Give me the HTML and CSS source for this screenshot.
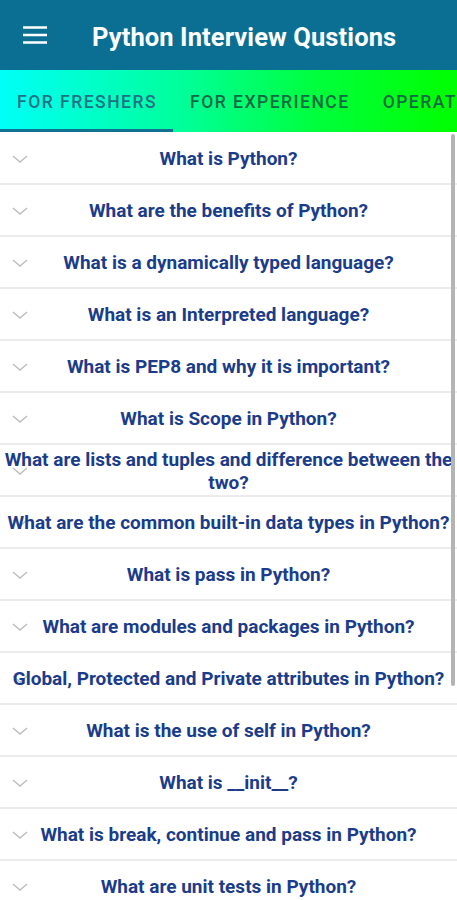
FILE: index.html
```html
<!DOCTYPE html>
<html>
<head>
<meta charset="utf-8">
<link rel="stylesheet" href="styles.css">
</head>
<body>
<div class="app">
  <header class="appbar">
    <svg class="menu" width="26" height="24" viewBox="0 0 26 24"><path d="M1 4.5h24M1 12h24M1 19.5h24" stroke="#fff" stroke-width="2.6" fill="none"/></svg>
    <h1 class="title">Python Interview Qustions</h1>
  </header>
  <nav class="tabs">
    <div class="tab active">FOR FRESHERS</div>
    <div class="tab">FOR EXPERIENCE</div>
    <div class="tab">OPERATORS</div>
  </nav>
  <main class="list">
    <div class="row"><svg class="chev" width="16" height="10" viewBox="0 0 16 10"><path d="M1 2l7 6 7-6" stroke="#bdbdbd" stroke-width="1.4" fill="none"/></svg><span class="q">What is Python?</span></div>
    <div class="row"><svg class="chev" width="16" height="10" viewBox="0 0 16 10"><path d="M1 2l7 6 7-6" stroke="#bdbdbd" stroke-width="1.4" fill="none"/></svg><span class="q">What are the benefits of Python?</span></div>
    <div class="row"><svg class="chev" width="16" height="10" viewBox="0 0 16 10"><path d="M1 2l7 6 7-6" stroke="#bdbdbd" stroke-width="1.4" fill="none"/></svg><span class="q">What is a dynamically typed language?</span></div>
    <div class="row"><svg class="chev" width="16" height="10" viewBox="0 0 16 10"><path d="M1 2l7 6 7-6" stroke="#bdbdbd" stroke-width="1.4" fill="none"/></svg><span class="q">What is an Interpreted language?</span></div>
    <div class="row"><svg class="chev" width="16" height="10" viewBox="0 0 16 10"><path d="M1 2l7 6 7-6" stroke="#bdbdbd" stroke-width="1.4" fill="none"/></svg><span class="q">What is PEP8 and why it is important?</span></div>
    <div class="row"><svg class="chev" width="16" height="10" viewBox="0 0 16 10"><path d="M1 2l7 6 7-6" stroke="#bdbdbd" stroke-width="1.4" fill="none"/></svg><span class="q">What is Scope in Python?</span></div>
    <div class="row"><svg class="chev" width="16" height="10" viewBox="0 0 16 10"><path d="M1 2l7 6 7-6" stroke="#bdbdbd" stroke-width="1.4" fill="none"/></svg><span class="q">What are lists and tuples and difference between the two?</span></div>
    <div class="row"><svg class="chev" width="16" height="10" viewBox="0 0 16 10"><path d="M1 2l7 6 7-6" stroke="#bdbdbd" stroke-width="1.4" fill="none"/></svg><span class="q">What are the common built-in data types in Python?</span></div>
    <div class="row"><svg class="chev" width="16" height="10" viewBox="0 0 16 10"><path d="M1 2l7 6 7-6" stroke="#bdbdbd" stroke-width="1.4" fill="none"/></svg><span class="q">What is pass in Python?</span></div>
    <div class="row"><svg class="chev" width="16" height="10" viewBox="0 0 16 10"><path d="M1 2l7 6 7-6" stroke="#bdbdbd" stroke-width="1.4" fill="none"/></svg><span class="q">What are modules and packages in Python?</span></div>
    <div class="row"><svg class="chev" width="16" height="10" viewBox="0 0 16 10"><path d="M1 2l7 6 7-6" stroke="#bdbdbd" stroke-width="1.4" fill="none"/></svg><span class="q">Global, Protected and Private attributes in Python?</span></div>
    <div class="row"><svg class="chev" width="16" height="10" viewBox="0 0 16 10"><path d="M1 2l7 6 7-6" stroke="#bdbdbd" stroke-width="1.4" fill="none"/></svg><span class="q">What is the use of self in Python?</span></div>
    <div class="row"><svg class="chev" width="16" height="10" viewBox="0 0 16 10"><path d="M1 2l7 6 7-6" stroke="#bdbdbd" stroke-width="1.4" fill="none"/></svg><span class="q">What is __init__?</span></div>
    <div class="row"><svg class="chev" width="16" height="10" viewBox="0 0 16 10"><path d="M1 2l7 6 7-6" stroke="#bdbdbd" stroke-width="1.4" fill="none"/></svg><span class="q">What is break, continue and pass in Python?</span></div>
    <div class="row"><svg class="chev" width="16" height="10" viewBox="0 0 16 10"><path d="M1 2l7 6 7-6" stroke="#bdbdbd" stroke-width="1.4" fill="none"/></svg><span class="q">What are unit tests in Python?</span></div>
    <div class="scrollbar"></div>
  </main>
</div>
</body>
</html>
```

FILE: styles.css
```css
* { box-sizing: border-box; }
html, body { margin: 0; padding: 0; }
body {
  width: 457px;
  height: 900px;
  overflow: hidden;
  background: #fff;
  font-family: Roboto, "Liberation Sans", sans-serif;
}
.app { display: flex; flex-direction: column; height: 900px; }
.appbar {
  height: 70px;
  background: #0b6f93;
  display: flex;
  align-items: center;
  padding-left: 22px;
  padding-top: 3px;
  flex: none;
}
.menu { flex: none; margin-top: -3px; }
.title {
  margin: 0 0 0 44px;
  color: #fff;
  font-size: 25.5px;
  font-weight: 700;
  letter-spacing: 0.1px;
}
.tabs {
  height: 62px;
  flex: none;
  display: flex;
  white-space: nowrap;
  overflow: hidden;
  background: linear-gradient(90deg, #00fff8 0%, #00ff9a 40%, #00ff3a 70%, #00ff00 100%);
}
.tab {
  padding: 2px 16px 0 17px;
  display: flex;
  align-items: center;
  font-size: 17.5px;
  font-weight: 500;
  letter-spacing: 1.5px;
  color: #0e6a42;
  flex: none;
}
.tab.active {
  color: #1c7184;
  border-bottom: 3px solid #107190;
  padding-top: 5px;
  width: 173px;
}
.list {
  position: relative;
  flex: 1;
  overflow: hidden;
  padding-top: 1px;
}
.row {
  display: grid;
  grid-template-areas: "cell";
  align-items: center;
  min-height: 52px;
  border-bottom: 2px solid #ececec;
  padding: 2px 0 1px;
}
.chev {
  grid-area: cell;
  margin-left: 12px;
  justify-self: start;
}
.q {
  grid-area: cell;
  text-align: center;
  font-size: 19px;
  font-weight: 700;
  line-height: 23px;
  color: #1a3c8a;
  padding: 0 4px;
}
.scrollbar {
  position: absolute;
  right: 2px;
  top: 2px;
  width: 4px;
  height: 552px;
  background: #b4b4b4;
  border-radius: 2px;
}
```
